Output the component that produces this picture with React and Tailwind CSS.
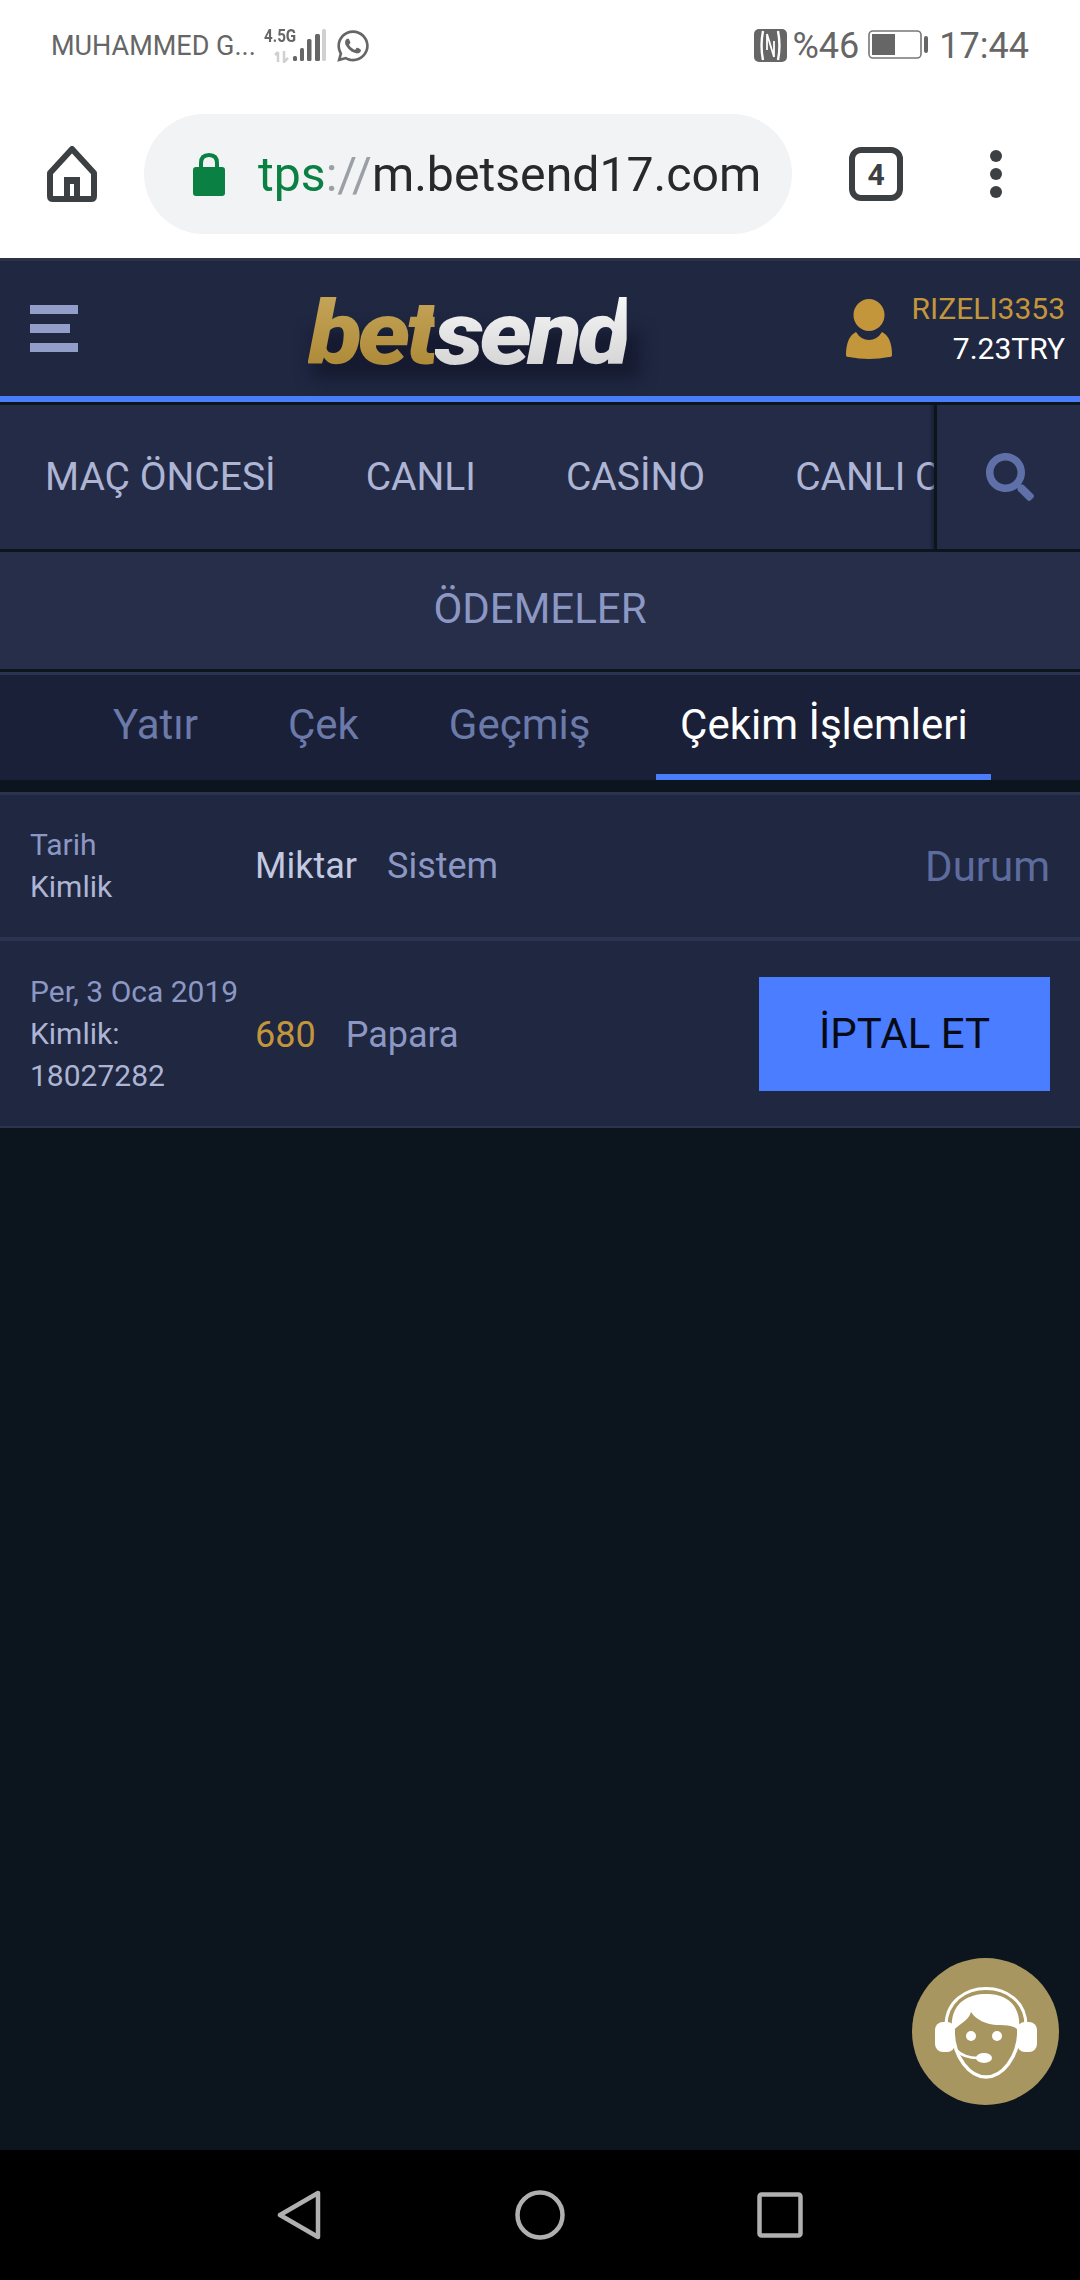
import React from "react";
import { FaWhatsapp, FaSearch } from "react-icons/fa";

function Home() {
  return (
    <svg width="50" height="56" viewBox="0 0 50 56" className="block">
      <path d="M25 3 L47 27 V50 Q47 53 44 53 H6 Q3 53 3 50 V27 Z" fill="none" stroke="#3c4043" strokeWidth="6" strokeLinejoin="round" />
      <path d="M17 53 V31 H33 V53 H27 V38 H23 V53 Z" fill="#3c4043" />
    </svg>
  );
}
function Lock() {
  return (
    <svg width="32" height="44" viewBox="0 0 32 44" className="block">
      <path d="M8 18 V11 Q8 3 16 3 Q24 3 24 11 V18" fill="none" stroke="#0b8043" strokeWidth="4" />
      <rect x="0" y="15" width="32" height="29" rx="3" fill="#0b8043" />
    </svg>
  );
}
function Signal() {
  return (
    <svg width="62" height="34" viewBox="0 0 62 34" className="block">
      <path d="M14 33 V23 M11 26 L14 23 M20 22 V33 L24 29" fill="none" stroke="#d0d0d0" strokeWidth="2.5" />
      <rect x="29" y="27" width="4" height="5" rx="1.5" fill="#666" />
      <rect x="36" y="19" width="4" height="13" rx="1.5" fill="#666" />
      <rect x="43" y="10" width="4.5" height="22" rx="1.5" fill="#666" />
      <rect x="51" y="5" width="5" height="27" rx="1.5" fill="#666" />
      <rect x="58" y="0" width="4" height="32" rx="1.5" fill="#d0d0d0" />
    </svg>
  );
}
function Nfc() {
  return (
    <svg width="33" height="33" viewBox="0 0 33 33" className="block">
      <rect width="33" height="33" rx="5" fill="#666" />
      <path d="M9 2 C7 12 7 21 9 31 M24 2 C26 12 26 21 24 31" fill="none" stroke="#fff" strokeWidth="2.4" />
      <path d="M13 5 V21 M13 5 L20 28 M20 12 V28" fill="none" stroke="#fff" strokeWidth="1.8" />
    </svg>
  );
}
function Battery() {
  return (
    <svg width="60" height="32" viewBox="0 0 60 32" className="block">
      <rect x="1" y="1" width="52" height="27" rx="4" fill="none" stroke="#777" strokeWidth="1.6" />
      <rect x="4" y="4" width="23" height="21" fill="#666" />
      <rect x="56" y="6" width="4" height="17" rx="2" fill="#666" />
    </svg>
  );
}
function Tabs4() {
  return (
    <div className="w-[54px] h-[54px] border-[6px] border-[#3c4043] rounded-[12px] flex items-center justify-center text-[#3c4043] text-[30px] font-bold font-['Roboto',sans-serif]">
      4
    </div>
  );
}
function Dots() {
  return (
    <div className="flex flex-col gap-[6px]">
      <span className="w-[12px] h-[12px] rounded-full bg-[#3c4043]" />
      <span className="w-[12px] h-[12px] rounded-full bg-[#3c4043]" />
      <span className="w-[12px] h-[12px] rounded-full bg-[#3c4043]" />
    </div>
  );
}
function User() {
  return (
    <svg width="48" height="60" viewBox="0 0 48 60" className="block">
      <ellipse cx="24" cy="16" rx="15.5" ry="16" fill="#c4963c" />
      <path d="M11 33 Q16 41 24 41 Q32 41 37 33 Q47 38 47 56 Q47 58 44 58 Q24 62 4 58 Q1 58 1 56 Q1 38 11 33 Z" fill="#c4963c" />
    </svg>
  );
}
function Agent() {
  return (
    <svg width="104" height="100" viewBox="0 0 104 100" className="block">
      <path d="M12 44 C12 -6 92 -6 92 44" fill="none" stroke="#fff" strokeWidth="3" />
      <path d="M18 50 C15 20 35 12 52 12 C72 12 88 22 85 50 C82 44 76 43 62 43 C52 42 42 38 37 30 C34 40 24 42 18 50 Z" fill="#fff" />
      <rect x="1" y="40" width="20" height="30" rx="8" fill="#fff" />
      <rect x="83" y="40" width="20" height="30" rx="8" fill="#fff" />
      <circle cx="37" cy="54" r="5" fill="#fff" />
      <circle cx="63" cy="54" r="5" fill="#fff" />
      <path d="M19 50 C20 76 36 95 52 95 C68 95 84 76 85 50" fill="none" stroke="#fff" strokeWidth="3.5" />
      <path d="M22 68 Q30 76 44 76" fill="none" stroke="#fff" strokeWidth="2.5" />
      <ellipse cx="50" cy="76" rx="8" ry="5" fill="#fff" />
    </svg>
  );
}

export default function App() {
  return (
    <div className="relative w-[1080px] h-[2280px] flex flex-col overflow-hidden bg-[#0c141d] font-['Roboto',sans-serif]">
      {/* Browser chrome */}
      <div className="h-[258px] shrink-0 bg-white flex flex-col">
        <div className="h-[90px] flex items-center justify-between pl-[51px] pr-[51px] pt-[1px] text-[#666]">
          <div className="flex items-center">
            <span className="text-[27px] leading-none mt-[2px]">MUHAMMED G...</span>
            <div className="relative w-[62px] h-[34px] ml-[8px]">
              <span className="absolute left-[0px] top-[-3px] text-[19px] font-bold leading-[20px] font-['Roboto',sans-serif] scale-x-[0.8] origin-left whitespace-nowrap">4.5G</span>
              <div className="absolute left-[0px] top-[0px]"><Signal /></div>
            </div>
            <FaWhatsapp className="w-[36px] h-[36px] ml-[9px] text-[#666]" />
          </div>
          <div className="flex items-center">
            <Nfc />
            <span className="text-[36px] leading-none ml-[6px]">%46</span>
            <div className="ml-[9px]"><Battery /></div>
            <span className="text-[36px] leading-none ml-[11px]">17:44</span>
          </div>
        </div>
        <div className="flex items-center h-[120px] mt-[24px] relative">
          <div className="w-[144px] flex justify-center pr-[1px]"><Home /></div>
          <div className="w-[648px] h-[120px] rounded-[60px] bg-[#f1f3f4] flex items-center pl-[49px]">
            <Lock />
            <span className="ml-[33px] mt-[3px] text-[48.2px] whitespace-nowrap leading-none">
              <span className="text-[#0b8043]">tps</span>
              <span className="text-[#9aa0a6]">://</span>
              <span className="text-[#28292c]">m.betsend17.com</span>
            </span>
          </div>
          <div className="ml-[57px]"><Tabs4 /></div>
          <div className="ml-[87px]"><Dots /></div>
        </div>
      </div>

      {/* Site header */}
      <div className="h-[138px] shrink-0 bg-[#1f2741] border-t-[3px] border-[#2b3248] flex items-center relative">
        <div className="flex flex-col items-start gap-[10px] ml-[30px] w-[48px]">
          <span className="block w-[48px] h-[9px] bg-[#929dc9]" />
          <span className="block w-[40px] h-[9px] bg-[#929dc9]" />
          <span className="block w-[48px] h-[9px] bg-[#929dc9]" />
        </div>
        <div className="relative ml-[226px] w-[344px] h-[100px] mt-[4px] shrink-0">
          <div className="absolute left-[8px] right-[8px] top-[50px] bottom-[2px] bg-[#151a30] blur-[8px]" />
          <div className="absolute left-[4px] top-[3px] text-[88px] leading-[100px] font-black italic tracking-[-4px] scale-x-[1.13] origin-left whitespace-nowrap blur-[0.6px]">
            <span className="bg-gradient-to-b from-[#c9a95e] to-[#a8842f] bg-clip-text text-transparent">bet</span>
            <span className="bg-gradient-to-b from-[#ffffff] to-[#cccccc] bg-clip-text text-transparent">send</span>
          </div>
        </div>
        <div className="ml-auto flex items-center pr-[15px]">
          <User />
          <div className="ml-[19px] flex flex-col items-end text-[30px] leading-[40px]">
            <span className="text-[#c4963c]">RIZELI3353</span>
            <span className="text-white">7.23TRY</span>
          </div>
        </div>
      </div>
      <div className="h-[6px] shrink-0 bg-[#4a7dfa]" />
      <div className="h-[3px] shrink-0 bg-[#0c141d]" />

      {/* Main nav */}
      <div className="h-[144px] shrink-0 bg-[#232b47] flex">
        <div className="w-[934px] shrink-0 overflow-hidden flex items-center pl-[45px] gap-[90px] text-[39px] text-[#aeb5d4] whitespace-nowrap">
          <span>MAÇ ÖNCESİ</span>
          <span>CANLI</span>
          <span>CASİNO</span>
          <span>CANLI CASİNO</span>
        </div>
        <div className="w-[3px] bg-[#0c141d] shrink-0 shadow-[-2px_0_3px_rgba(12,20,29,0.6)]" />
        <div className="flex-1 flex items-center justify-center pb-[1px] pl-[3px]">
          <FaSearch className="w-[48px] h-[48px] text-[#5f70a8]" />
        </div>
      </div>
      <div className="h-[3px] shrink-0 bg-[#0c141d]" />

      {/* Title */}
      <div className="h-[117px] shrink-0 bg-[#262e49] flex items-center justify-center pb-[4px] text-[42px] text-[#8c97c4]">
        ÖDEMELER
      </div>
      <div className="h-[3px] shrink-0 bg-[#0c141d]" />

      {/* Tabs */}
      <div className="h-[108px] shrink-0 bg-[#1a2038] border-t-[3px] border-[#2a3350] flex text-[42px] text-[#6c7aaa] pl-[113px]">
        <div className="h-full flex items-center pb-[6px]">Yatır</div>
        <div className="h-full flex items-center pb-[6px] ml-[90px]">Çek</div>
        <div className="h-full flex items-center pb-[6px] ml-[90px]">Geçmiş</div>
        <div className="h-full w-[335px] ml-[66px] flex items-center justify-center pb-[1px] text-white border-b-[6px] border-[#4a7dfa]">Çekim İşlemleri</div>
      </div>
      <div className="h-[12px] shrink-0 bg-[#0c141d]" />

      {/* Table header */}
      <div className="h-[145px] shrink-0 bg-[#1f2741] border-t-[3px] border-[#2a3350] flex items-center pl-[30px] pr-[30px]">
        <div className="w-[225px] flex flex-col text-[30px] leading-[42px]">
          <span className="text-[#8c97c4]">Tarih</span>
          <span className="text-[#aeb5d4]">Kimlik</span>
        </div>
        <span className="text-[36px] text-[#c3c9e0]">Miktar</span>
        <span className="text-[36px] text-[#8c97c4] ml-[30px]">Sistem</span>
        <span className="text-[42px] text-[#5d6c9d] ml-auto">Durum</span>
      </div>

      {/* Row */}
      <div className="h-[191px] shrink-0 bg-[#1f2741] border-t-[4px] border-b-[2px] border-[#2a3350] flex items-center pl-[30px] pr-[30px]">
        <div className="w-[225px] flex flex-col text-[30px] leading-[42px] whitespace-nowrap">
          <span className="text-[#8c97c4]">Per, 3 Oca 2019</span>
          <span className="text-[#aeb5d4]">Kimlik:</span>
          <span className="text-[#aeb5d4]">18027282</span>
        </div>
        <span className="text-[36px] text-[#c4963c] pt-[2px]">680</span>
        <span className="text-[36px] text-[#8c97c4] ml-[30px] pt-[2px]">Papara</span>
        <div className="ml-auto w-[291px] h-[114px] bg-[#4a7dff] flex items-center justify-center text-[42px] text-[#050a14]">
          İPTAL ET
        </div>
      </div>

      <div className="flex-1" />

      {/* Android nav */}
      <div className="h-[130px] shrink-0 bg-black flex items-center justify-center pb-[1px]">
        <svg width="44" height="50" viewBox="0 0 44 50" className="block">
          <path d="M41 3 V47 L3 25 Z" fill="none" stroke="#b0b0b0" strokeWidth="4.5" strokeLinejoin="round" />
        </svg>
        <svg width="50" height="50" viewBox="0 0 50 50" className="block ml-[194px]">
          <circle cx="25" cy="25" r="22.5" fill="none" stroke="#b0b0b0" strokeWidth="4.5" />
        </svg>
        <svg width="46" height="46" viewBox="0 0 46 46" className="block ml-[192px]">
          <rect x="2.5" y="2.5" width="41" height="41" rx="2" fill="none" stroke="#b0b0b0" strokeWidth="4.5" />
        </svg>
      </div>

      {/* Chat */}
      <div className="absolute left-[912px] top-[1958px] w-[147px] h-[147px] rounded-full bg-[#a89660] flex items-center justify-center">
        <Agent />
      </div>
    </div>
  );
}
